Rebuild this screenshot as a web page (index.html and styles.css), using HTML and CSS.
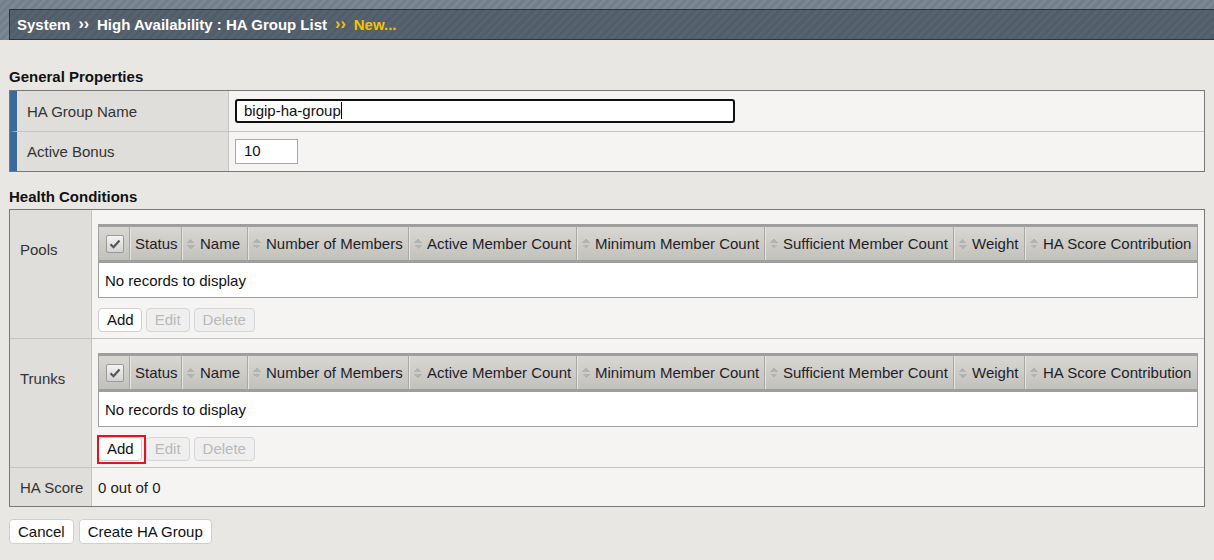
FILE: index.html
```html
<!DOCTYPE html>
<html>
<head>
<meta charset="utf-8">
<link rel="stylesheet" href="styles.css">
</head>
<body>
<div class="topband">
  <div class="crumbbar">
    <span class="crumb">System</span>
    <span class="sep">&rsaquo;&rsaquo;</span>
    <span class="crumb">High Availability : HA Group List</span>
    <span class="sep yellow">&rsaquo;&rsaquo;</span>
    <span class="crumb yellow">New...</span>
  </div>
</div>

<div class="page">
  <h2 class="section">General Properties</h2>
  <table class="props">
    <tr class="r1">
      <td class="plabel">HA Group Name</td>
      <td class="pvalue"><div class="input focus">bigip-ha-group<span class="caret"></span></div></td>
    </tr>
    <tr class="r2">
      <td class="plabel">Active Bonus</td>
      <td class="pvalue"><div class="input small">10</div></td>
    </tr>
  </table>

  <h2 class="section sec2">Health Conditions</h2>
  <table class="health">
    <tr>
      <td class="hlabel">Pools</td>
      <td class="hvalue">
        <table class="grid">
          <colgroup>
            <col class="c1"><col class="c2"><col class="c3"><col class="c4"><col class="c5"><col class="c6"><col class="c7"><col class="c8"><col>
          </colgroup>
          <thead>
            <tr>
              <th class="chk"><span class="cbox"><svg width="12" height="10" viewBox="0 0 12 10"><path d="M1.5 5.2 L4.5 8.2 L10.5 1.5" fill="none" stroke="#555" stroke-width="2.2"/></svg></span></th>
              <th>Status</th>
              <th><span class="sort"></span>Name</th>
              <th><span class="sort"></span>Number of Members</th>
              <th><span class="sort"></span>Active Member Count</th>
              <th><span class="sort"></span>Minimum Member Count</th>
              <th><span class="sort"></span>Sufficient Member Count</th>
              <th><span class="sort"></span>Weight</th>
              <th><span class="sort"></span>HA Score Contribution</th>
            </tr>
          </thead>
          <tbody>
            <tr><td colspan="9">No records to display</td></tr>
          </tbody>
        </table>
        <div class="btnrow">
          <button class="btn">Add</button>
          <button class="btn disabled">Edit</button>
          <button class="btn disabled">Delete</button>
        </div>
      </td>
    </tr>
    <tr>
      <td class="hlabel">Trunks</td>
      <td class="hvalue">
        <table class="grid">
          <colgroup>
            <col class="c1"><col class="c2"><col class="c3"><col class="c4"><col class="c5"><col class="c6"><col class="c7"><col class="c8"><col>
          </colgroup>
          <thead>
            <tr>
              <th class="chk"><span class="cbox"><svg width="12" height="10" viewBox="0 0 12 10"><path d="M1.5 5.2 L4.5 8.2 L10.5 1.5" fill="none" stroke="#555" stroke-width="2.2"/></svg></span></th>
              <th>Status</th>
              <th><span class="sort"></span>Name</th>
              <th><span class="sort"></span>Number of Members</th>
              <th><span class="sort"></span>Active Member Count</th>
              <th><span class="sort"></span>Minimum Member Count</th>
              <th><span class="sort"></span>Sufficient Member Count</th>
              <th><span class="sort"></span>Weight</th>
              <th><span class="sort"></span>HA Score Contribution</th>
            </tr>
          </thead>
          <tbody>
            <tr><td colspan="9">No records to display</td></tr>
          </tbody>
        </table>
        <div class="btnrow">
          <button class="btn highlight">Add</button>
          <button class="btn disabled">Edit</button>
          <button class="btn disabled">Delete</button>
        </div>
      </td>
    </tr>
    <tr>
      <td class="hlabel score">HA Score</td>
      <td class="hvalue score">0 out of 0</td>
    </tr>
  </table>

  <div class="actions">
    <button class="btn">Cancel</button>
    <button class="btn">Create HA Group</button>
  </div>
</div>
</body>
</html>
```

FILE: styles.css
```css
* { box-sizing: border-box; }
html, body { margin: 0; padding: 0; }
body {
  background: #e8e7e3;
  font-family: "Liberation Sans", Arial, sans-serif;
  font-size: 15px;
  color: #222;
  overflow: hidden;
}
.topband {
  height: 40px;
  padding: 9px 0 0 9px;
  background: #76838f repeating-linear-gradient(135deg, rgba(255,255,255,0.035) 0 3px, rgba(0,0,0,0.03) 3px 6px);
}
.crumbbar {
  height: 31px;
  border: 1px solid #2e343a;
  border-right: none;
  background: #535f6b repeating-linear-gradient(135deg, rgba(255,255,255,0.02) 0 3px, rgba(0,0,0,0.02) 3px 6px);
  display: flex;
  align-items: center;
  padding-left: 7px;
  padding-bottom: 1px;
  color: #fff;
  font-weight: bold;
  font-size: 15px;
}
.crumb { white-space: nowrap; }
.sep { margin: 0 8px; font-size: 16px; }
.yellow { color: #f5c400; }

.page { padding: 0 9px; }
.section {
  margin: 0;
  font-size: 15px;
  font-weight: bold;
  color: #111;
  height: 50px;
  padding-top: 28px;
  line-height: 17px;
}
.sec2 { height: 37px; padding-top: 16px; }

table { border-collapse: separate; border-spacing: 0; }
td, th { box-sizing: content-box; }

.props {
  width: 1196px;
  border: 1px solid #787878;
}
.r1 td { height: 40px; }
.r2 td { height: 39px; border-top: 1px solid #c4c4c4; }
.plabel {
  width: 201px;
  background: #dfdeda;
  border-left: 7px solid #3b6a9a;
  border-right: 1px solid #c4c4c4;
  padding: 0 0 0 10px;
  vertical-align: middle;
  color: #333;
}
.pvalue {
  background: #f5f4f2;
  padding: 0 6px;
  vertical-align: middle;
}
.input {
  background: #fff;
  height: 25px;
  line-height: 22px;
  padding: 0 8px;
  border: 1px solid #a9a9a9;
  color: #111;
}
.input.focus {
  width: 500px;
  border: 2px solid #111;
  border-radius: 3px;
  padding: 0 7px;
  height: 24px;
  line-height: 20px;
}
.caret {
  display: inline-block;
  width: 1px;
  height: 17px;
  background: #000;
  vertical-align: -3px;
}
.input.small { width: 63px; }

.health {
  width: 1196px;
  border: 1px solid #787878;
}
.health > tbody > tr + tr > td { border-top: 1px solid #c4c4c4; }
.hlabel {
  width: 71px;
  background: #dfdeda;
  border-right: 1px solid #c4c4c4;
  padding: 31px 0 0 10px;
  vertical-align: top;
  color: #333;
}
.hlabel.score { padding-top: 0; vertical-align: middle; height: 38px; }
.hvalue {
  background: #f5f4f2;
  padding: 14px 6px 6px 6px;
  vertical-align: top;
}
.hvalue.score { padding: 0 6px; vertical-align: middle; height: 38px; }

.grid {
  width: 1100px;
  table-layout: fixed;
  border: 1px solid #a0a0a0;
  border-top: none;
}
.c1 { width: 30px; }
.c2 { width: 52px; }
.c3 { width: 66px; }
.c4 { width: 161px; }
.c5 { width: 168px; }
.c6 { width: 188px; }
.c7 { width: 189px; }
.c8 { width: 71px; }
.grid th {
  height: 33px;
  border-top: 3px solid #9e9e9e;
  border-bottom: 3px solid #9e9e9e;
  border-left: 1px solid #a8a8a8;
  background: linear-gradient(#d9d7d3, #c3c1bc);
  box-shadow: inset 1px 0 0 #e6e4e0;
  font-weight: normal;
  text-align: left;
  padding: 0 0 0 5px;
  white-space: nowrap;
  overflow: hidden;
  color: #1e1e2a;
  vertical-align: middle;
}
.grid th:first-child { border-left: none; box-shadow: none; }
.grid th.chk { padding: 0 0 0 7px; }
.cbox {
  display: inline-flex;
  align-items: center;
  justify-content: center;
  width: 18px;
  height: 18px;
  border: 1px solid #9a9a9a;
  border-radius: 2px;
  background: linear-gradient(#f4f4f4, #d2d2d2);
  vertical-align: middle;
}
.sort {
  display: inline-block;
  width: 8px;
  height: 11px;
  margin-right: 5px;
  vertical-align: -1px;
  background:
    linear-gradient(to bottom right, transparent 50%, #b3b3b3 50%) 0 0 / 4px 4px no-repeat,
    linear-gradient(to bottom left, transparent 50%, #b3b3b3 50%) 4px 0 / 4px 4px no-repeat,
    linear-gradient(to top right, transparent 50%, #b3b3b3 50%) 0 6px / 4px 4px no-repeat,
    linear-gradient(to top left, transparent 50%, #b3b3b3 50%) 4px 6px / 4px 4px no-repeat;
}
.grid td {
  background: #fff;
  height: 34px;
  padding: 0 6px;
  color: #111;
  vertical-align: middle;
}

.btnrow {
  display: flex;
  gap: 4px;
  margin-top: 10px;
}
.btn {
  font-family: "Liberation Sans", Arial, sans-serif;
  font-size: 15px;
  height: 24px;
  padding: 0 8px;
  background: #fff;
  border: 1px solid #cfcfcf;
  border-radius: 4px;
  color: #111;
  line-height: 20px;
}
.btnrow .btn:first-child { padding: 0 7px 0 8px; }
.btn.disabled {
  background: #efefef;
  color: #b9b9b9;
  border-color: #d6d6d6;
}
.btn.highlight { position: relative; }
.btn.highlight::after {
  content: "";
  box-sizing: border-box;
  position: absolute;
  left: -2px;
  top: -3px;
  width: 49px;
  height: 29px;
  border: 2px solid #e3141f;
}
.actions {
  display: flex;
  gap: 5px;
  margin-top: 12px;
}
.actions .btn { height: 25px; }
```
